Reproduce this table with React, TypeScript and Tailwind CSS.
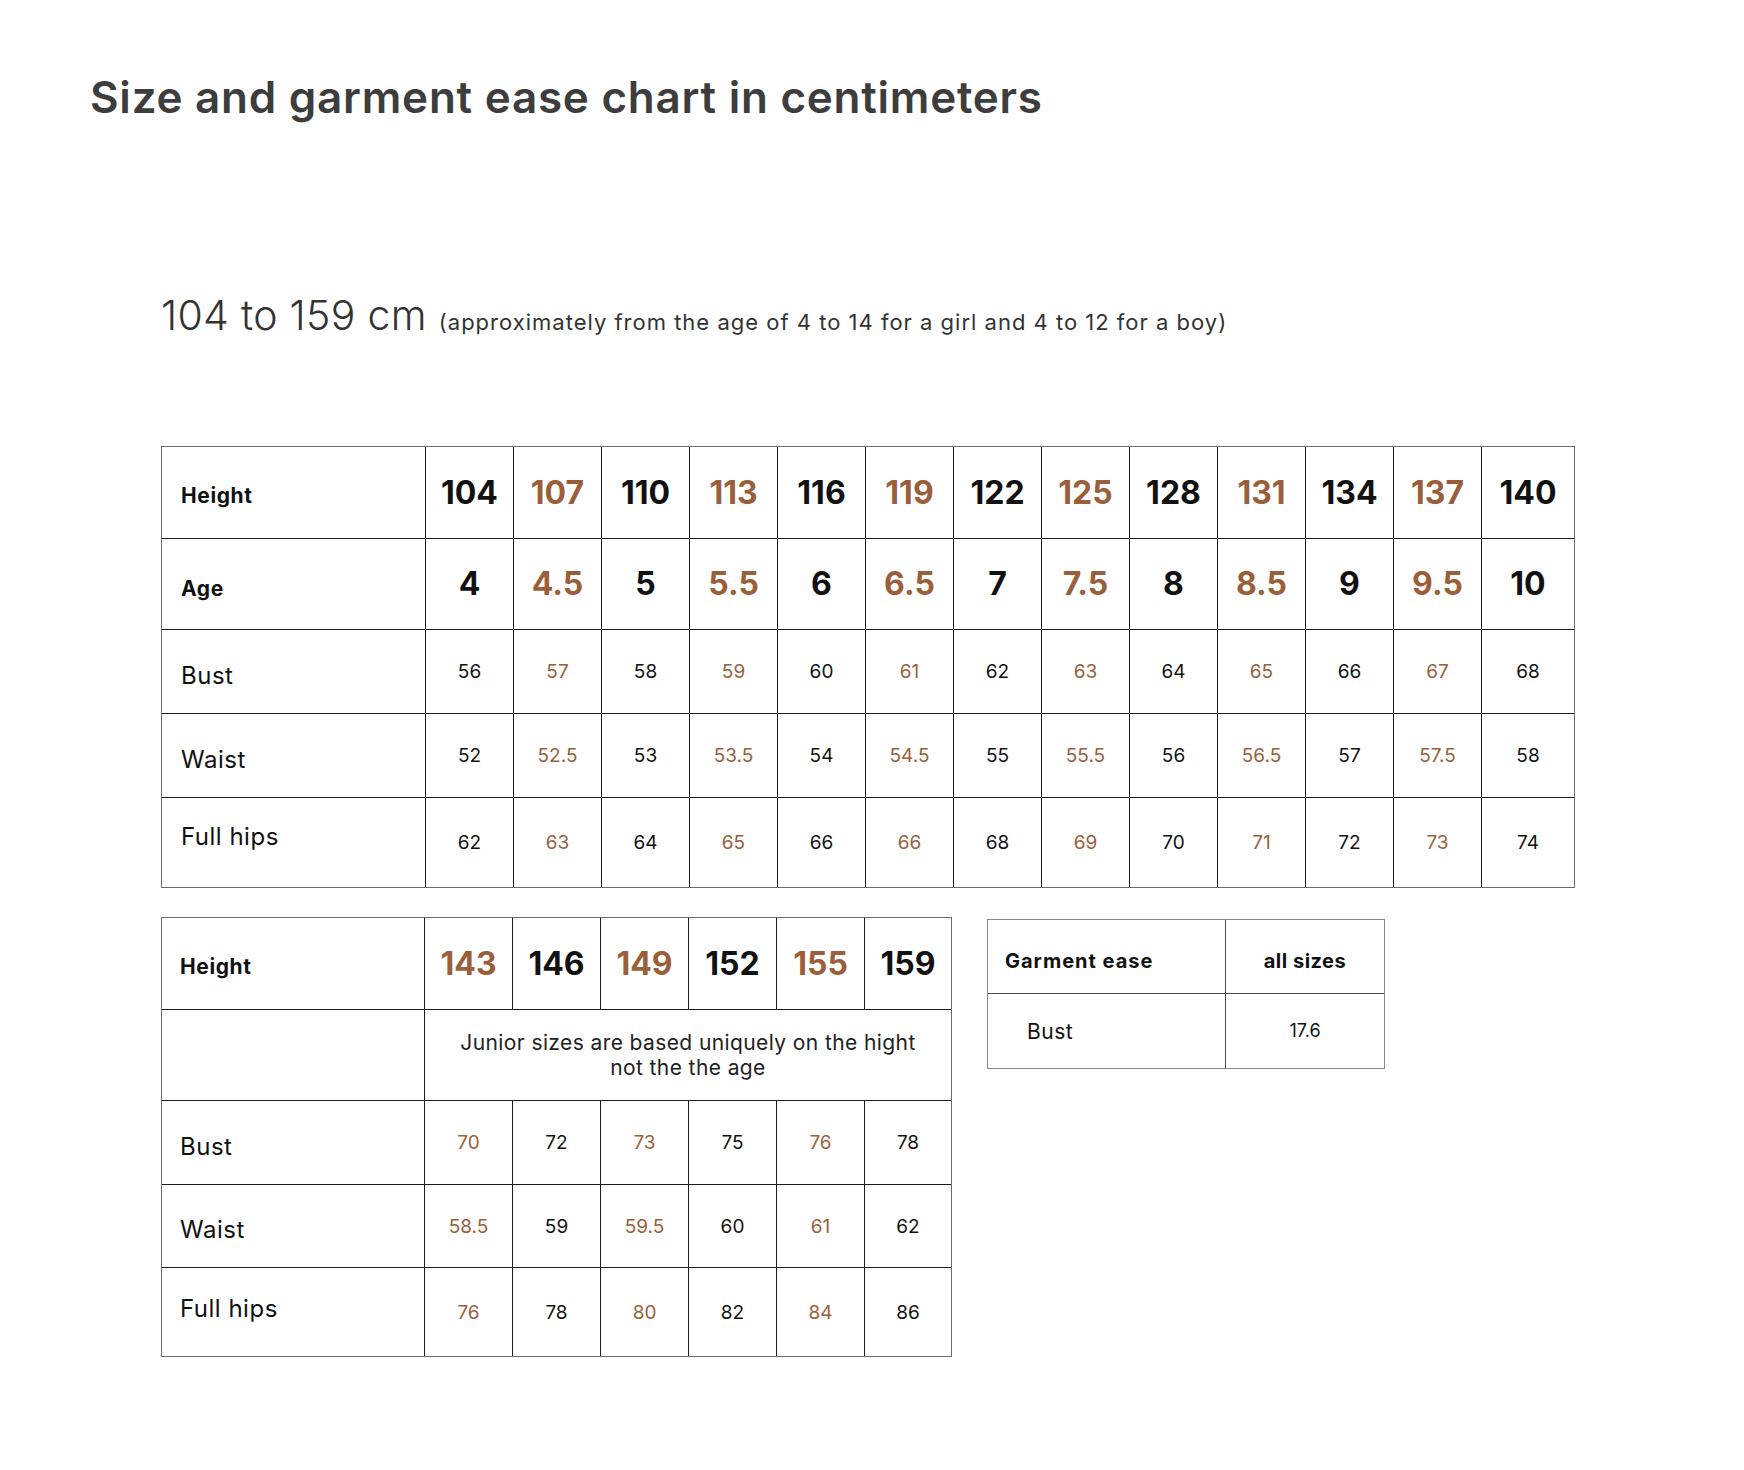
const heights = ["104", "107", "110", "113", "116", "119", "122", "125", "128", "131", "134", "137", "140"];
const ages = ["4", "4.5", "5", "5.5", "6", "6.5", "7", "7.5", "8", "8.5", "9", "9.5", "10"];
const bust = ["56", "57", "58", "59", "60", "61", "62", "63", "64", "65", "66", "67", "68"];
const waist = ["52", "52.5", "53", "53.5", "54", "54.5", "55", "55.5", "56", "56.5", "57", "57.5", "58"];
const hips = ["62", "63", "64", "65", "66", "66", "68", "69", "70", "71", "72", "73", "74"];

const juniorHeights = ["143", "146", "149", "152", "155", "159"];
const juniorBust = ["70", "72", "73", "75", "76", "78"];
const juniorWaist = ["58.5", "59", "59.5", "60", "61", "62"];
const juniorHips = ["76", "78", "80", "82", "84", "86"];

type Row = {
  label: string;
  labelCls: string;
  valCls: string;
  values: string[];
};

const bigNum = "font-bold text-[32px] leading-none";
const smallNum = "text-[19px] leading-none";

const App = () => {
  const rows: Row[] = [
    { label: "Height", labelCls: "font-bold text-[21px] tracking-[0.6px] pt-[5px]", valCls: bigNum, values: heights },
    { label: "Age", labelCls: "font-bold text-[21px] tracking-[0.6px] pt-[8px]", valCls: bigNum, values: ages },
    { label: "Bust", labelCls: "text-[24px] tracking-[0.5px] pt-[8px]", valCls: smallNum, values: bust },
    { label: "Waist", labelCls: "text-[24px] tracking-[0.5px] pt-[8px]", valCls: smallNum, values: waist },
    { label: "Full hips", labelCls: "text-[24px] tracking-[0.5px] pb-[11px]", valCls: smallNum, values: hips },
  ];

  const juniorRows: Row[] = [
    { label: "Bust", labelCls: "text-[24px] tracking-[0.5px] pt-[9px]", valCls: smallNum, values: juniorBust },
    { label: "Waist", labelCls: "text-[24px] tracking-[0.5px] pt-[8px]", valCls: smallNum, values: juniorWaist },
    { label: "Full hips", labelCls: "text-[24px] tracking-[0.5px] pb-[7px]", valCls: smallNum, values: juniorHips },
  ];

  return (
    <div className="min-h-screen bg-white font-[family-name:Inter,sans-serif] text-[#111111] pl-[90px] pt-[75px]">
      <h1 className="text-[44px] leading-none font-semibold tracking-[0.75px] text-[#3d3d3d]">
        Size and garment ease chart in centimeters
      </h1>

      <div className="ml-[71px] mt-[176px] flex items-baseline gap-[12px] text-[#333333]">
        <span className="text-[41px] leading-none font-light tracking-[0.3px]">104 to 159 cm</span>
        <span className="text-[22px] leading-none tracking-[1px]">
          (approximately from the age of 4 to 14 for a girl and 4 to 12 for a boy)
        </span>
      </div>

      {/* main chart */}
      <div className="ml-[71px] mt-[110px] w-[1414px] border border-[#6b6b6b]">
        <div className="grid grid-cols-[264px_repeat(12,88px)_92px] grid-rows-[92px_91px_84px_84px_89px]">
          {rows.map((row, r) => {
            const lastRow = r === rows.length - 1;
            return [
              <div
                key={row.label}
                className={`flex items-center pl-[19px] border-r border-[#1c1c1c] leading-none ${row.labelCls} ${lastRow ? "" : "border-b"}`}
              >
                {row.label}
              </div>,
              ...row.values.map((v, i) => (
                <div
                  key={row.label + i}
                  className={`flex items-center justify-center border-[#1c1c1c] ${row.valCls} ${i % 2 === 1 ? "text-[#9a5f3a]" : "text-[#111111]"} ${i === row.values.length - 1 ? "" : "border-r"} ${lastRow ? "" : "border-b"}`}
                >
                  {v}
                </div>
              )),
            ];
          })}
        </div>
      </div>

      <div className="ml-[71px] mt-[29px] flex items-start">
        {/* junior sizes */}
        <div className="w-[791px] border border-[#6b6b6b]">
          <div className="grid grid-cols-[263px_repeat(5,88px)_86px] grid-rows-[92px_91px_84px_83px_88px]">
            <div className="flex items-center pl-[18px] pt-[6px] border-r border-b border-[#1c1c1c] font-bold text-[21px] tracking-[0.6px] leading-none">
              Height
            </div>
            {juniorHeights.map((v, i) => (
              <div
                key={v}
                className={`flex items-center justify-center border-b border-[#1c1c1c] ${bigNum} ${i % 2 === 0 ? "text-[#9a5f3a]" : "text-[#111111]"} ${i === juniorHeights.length - 1 ? "" : "border-r"}`}
              >
                {v}
              </div>
            ))}

            <div className="border-r border-b border-[#1c1c1c]" />
            <div className="col-span-6 flex items-center justify-center border-b border-[#1c1c1c] px-[10px] text-center text-[21px] leading-[25px] tracking-[0.4px] text-[#222222]">
              Junior sizes are based uniquely on the hight
              <br />
              not the the age
            </div>

            {juniorRows.map((row, r) => {
              const lastRow = r === juniorRows.length - 1;
              return [
                <div
                  key={row.label}
                  className={`flex items-center pl-[18px] border-r border-[#1c1c1c] leading-none ${row.labelCls} ${lastRow ? "" : "border-b"}`}
                >
                  {row.label}
                </div>,
                ...row.values.map((v, i) => (
                  <div
                    key={row.label + i}
                    className={`flex items-center justify-center border-[#1c1c1c] ${row.valCls} ${i % 2 === 0 ? "text-[#9a5f3a]" : "text-[#111111]"} ${i === row.values.length - 1 ? "" : "border-r"} ${lastRow ? "" : "border-b"}`}
                  >
                    {v}
                  </div>
                )),
              ];
            })}
          </div>
        </div>

        {/* garment ease */}
        <div className="ml-[35px] mt-[2px] w-[398px] border border-[#8a8a8a]">
          <div className="grid grid-cols-[238px_158px] grid-rows-[74px_74px]">
            <div className="flex items-center pl-[17px] pt-[8px] border-r border-b border-[#4a4a4a] font-bold text-[20px] tracking-[1px] leading-none">
              Garment ease
            </div>
            <div className="flex items-center justify-center pt-[8px] border-b border-[#4a4a4a] font-bold text-[20px] tracking-[0.5px] leading-none">
              all sizes
            </div>
            <div className="flex items-center pl-[39px] border-r border-[#4a4a4a] text-[21px] tracking-[0.5px] leading-none">
              Bust
            </div>
            <div className="flex items-center justify-center text-[18px] leading-none">
              17.6
            </div>
          </div>
        </div>
      </div>
    </div>
  );
};

export default App;
